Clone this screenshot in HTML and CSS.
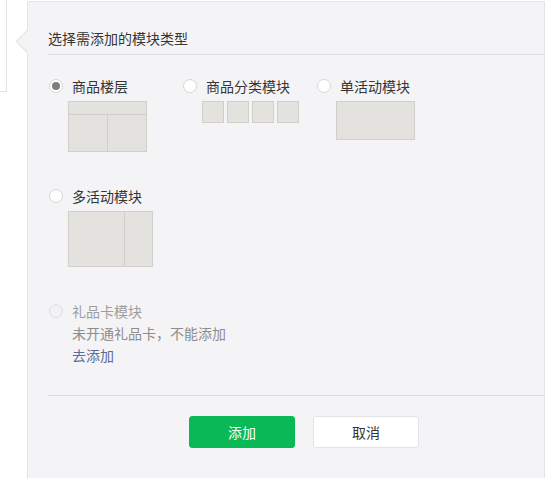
FILE: index.html
```html
<!DOCTYPE html>
<html lang="zh-CN">
<head>
<meta charset="utf-8">
<title>选择模块</title>
<link rel="stylesheet" href="styles.css">
</head>
<body>
<div class="side"></div>
<div class="panel">
  <span class="arrow"></span>
  <div class="title">选择需添加的模块类型</div>
  <div class="options">
    <div class="option">
      <div class="opt-head"><span class="radio checked"></span><span class="label">商品楼层</span></div>
      <div class="thumb thumb-floor">
        <div class="floor-top"></div>
        <div class="floor-bottom"><div class="floor-left"></div><div class="floor-right"></div></div>
      </div>
    </div>
    <div class="option">
      <div class="opt-head"><span class="radio"></span><span class="label">商品分类模块</span></div>
      <div class="thumb thumb-cats">
        <span class="cat"></span><span class="cat"></span><span class="cat"></span><span class="cat"></span>
      </div>
    </div>
    <div class="option">
      <div class="opt-head"><span class="radio"></span><span class="label">单活动模块</span></div>
      <div class="thumb thumb-single"></div>
    </div>
    <div class="option">
      <div class="opt-head"><span class="radio"></span><span class="label">多活动模块</span></div>
      <div class="thumb thumb-multi"><div class="multi-left"></div><div class="multi-right"></div></div>
    </div>
    <div class="option option-wide">
      <div class="opt-head"><span class="radio disabled"></span><span class="label label-disabled">礼品卡模块</span></div>
      <div class="desc">
        <div class="desc-line">未开通礼品卡，不能添加</div>
        <div class="desc-line"><a class="link" href="#">去添加</a></div>
      </div>
    </div>
  </div>
  <div class="footer">
    <button class="btn btn-primary" type="button">添加</button>
    <button class="btn btn-default" type="button">取消</button>
  </div>
</div>
</body>
</html>
```

FILE: styles.css
```css
* { box-sizing: border-box; }

html, body {
  margin: 0;
  padding: 0;
  background: #ffffff;
}

body {
  display: flex;
  align-items: flex-start;
  font-family: "Noto Sans CJK SC", "Noto Sans", sans-serif;
  font-size: 14px;
  color: #353535;
  height: 478px;
  overflow: hidden;
}

.side {
  flex: none;
  width: 7px;
  height: 92px;
  background: #ffffff;
  border-right: 1px solid #e2e2e2;
  border-bottom: 1px solid #e2e2e2;
}

.panel {
  position: relative;
  flex: 1;
  margin-left: 20px;
  margin-top: 1px;
  height: 477px;
  background: #f4f4f6;
  border: 1px solid #e4e4e6;
  border-bottom: 0;
  padding: 0 0 0 20px;
}

.arrow {
  position: absolute;
  left: -9.5px;
  top: 30.5px;
  width: 17px;
  height: 17px;
  background: #f4f4f6;
  border-left: 1px solid #e4e4e6;
  border-bottom: 1px solid #e4e4e6;
  transform: rotate(45deg);
}

.title {
  padding-top: 26px;
  padding-bottom: 6px;
  line-height: 20px;
  border-bottom: 1px solid #e0e0e2;
}

.options {
  display: grid;
  grid-template-columns: repeat(3, 134px);
  row-gap: 34px;
  padding-top: 21px;
}

.option-wide {
  grid-column: 1 / -1;
}

.opt-head {
  display: flex;
  align-items: center;
  height: 20px;
  line-height: 20px;
}

.radio {
  flex: none;
  width: 14px;
  height: 14px;
  margin-left: 1px;
  margin-right: 9px;
  border-radius: 50%;
  background: #ffffff;
  border: 1px solid #d6d6d6;
  display: flex;
  align-items: center;
  justify-content: center;
}

.radio.checked::after {
  content: "";
  width: 8px;
  height: 8px;
  border-radius: 50%;
  background: #7d7d7d;
}

.radio.disabled {
  background: #f2f2f4;
  border-color: #dedede;
}

.label-disabled {
  color: #9d9d9d;
}

.thumb {
  margin-top: 5px;
  margin-left: 20px;
}

.thumb-floor {
  width: 79px;
  height: 51px;
  background: #e3e2de;
  border: 1px solid #d0cfca;
  display: flex;
  flex-direction: column;
}

.floor-top {
  height: 13px;
  border-bottom: 1px solid #d0cfca;
}

.floor-bottom {
  flex: 1;
  display: flex;
}

.floor-left {
  width: 39px;
  border-right: 1px solid #d0cfca;
}

.floor-right {
  flex: 1;
}

.thumb-cats {
  display: flex;
  gap: 3px;
}

.cat {
  width: 22px;
  height: 22px;
  background: #e3e2de;
  border: 1px solid #d0cfca;
}

.thumb-single {
  width: 79px;
  height: 39px;
  background: #e3e2de;
  border: 1px solid #d0cfca;
}

.thumb-multi {
  width: 85px;
  height: 56px;
  background: #e3e2de;
  border: 1px solid #d0cfca;
  display: flex;
}

.multi-left {
  width: 56px;
  border-right: 1px solid #d0cfca;
}

.multi-right {
  flex: 1;
}

.desc {
  margin-top: 1px;
  padding-left: 24px;
}

.desc-line {
  line-height: 22px;
  color: #8d8d8d;
  white-space: nowrap;
}

.link {
  color: #576b95;
  text-decoration: none;
}

.footer {
  margin-top: 29px;
  border-top: 1px solid #dcdcde;
  padding-top: 20px;
  padding-left: 141px;
  display: flex;
  gap: 18px;
}

.btn {
  width: 106px;
  height: 32px;
  border-radius: 3px;
  font-family: inherit;
  font-size: 14px;
  line-height: 30px;
  padding: 0;
  cursor: pointer;
}

.btn-primary {
  background: #09b955;
  border: 1px solid #09b955;
  color: #ffffff;
}

.btn-default {
  background: #ffffff;
  border: 1px solid #e4e4e6;
  color: #353535;
}
```
